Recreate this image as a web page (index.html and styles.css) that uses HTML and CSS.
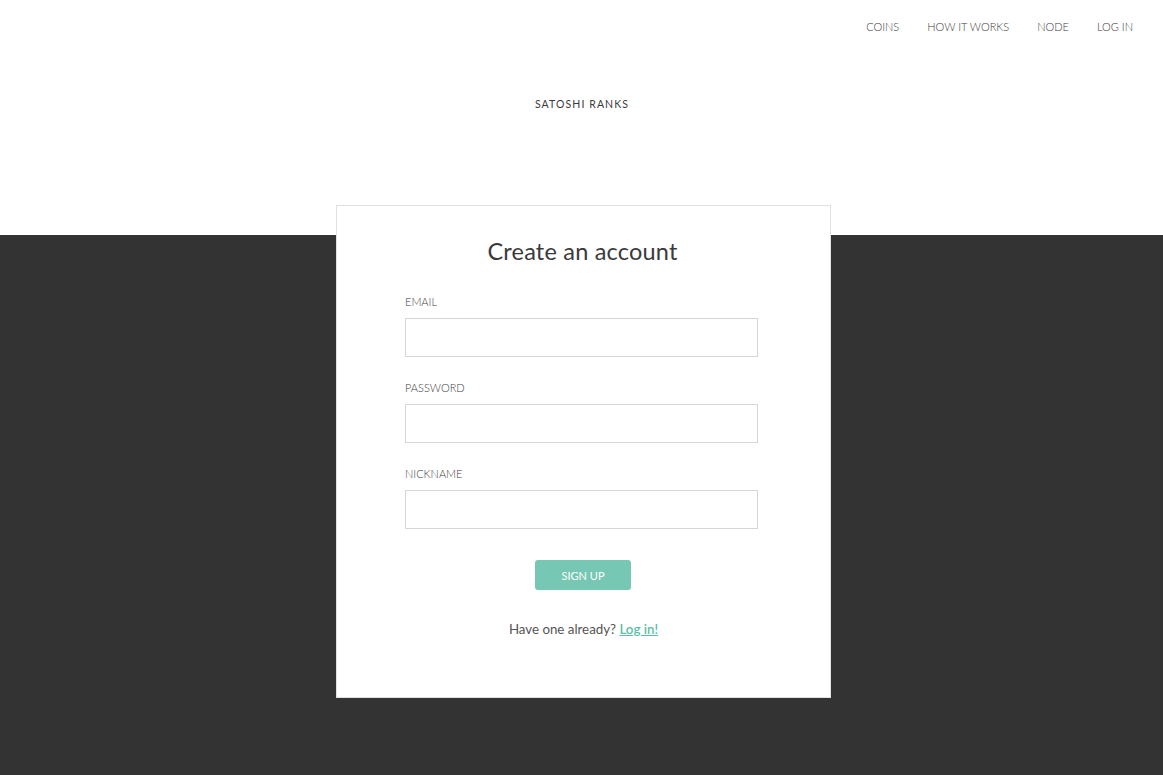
FILE: index.html
```html
<!DOCTYPE html>
<html>
<head>
<meta charset="utf-8">
<link rel="stylesheet" href="styles.css">
</head>
<body>
<header class="top">
  <nav class="nav">
    <a class="nav-link" href="#">COINS</a>
    <a class="nav-link" href="#">HOW IT WORKS</a>
    <a class="nav-link" href="#">NODE</a>
    <a class="nav-link" href="#">LOG IN</a>
  </nav>
  <div class="brand">SATOSHI RANKS</div>
</header>
<main class="band">
  <section class="card">
    <h1 class="title">Create an account</h1>
    <form class="form">
      <label class="field">
        <span class="label">EMAIL</span>
        <input class="input" type="text">
      </label>
      <label class="field">
        <span class="label">PASSWORD</span>
        <input class="input" type="password">
      </label>
      <label class="field">
        <span class="label">NICKNAME</span>
        <input class="input" type="text">
      </label>
      <button class="btn" type="button">SIGN UP</button>
    </form>
    <p class="alt">Have one already? <a class="alt-link" href="#">Log in!</a></p>
  </section>
</main>
</body>
</html>
```
FILE: styles.css
```css
html, body {
  margin: 0;
  padding: 0;
  height: 100%;
}
body {
  font-family: Lato, "Open Sans", "Liberation Sans", sans-serif;
  color: #444;
  background: #333333;
  display: flex;
  flex-direction: column;
}
.top {
  background: #fff;
  height: 235px;
  flex: none;
}
.nav {
  display: flex;
  justify-content: flex-end;
  gap: 28px;
  padding: 19px 30px 0 0;
}
.nav-link {
  font-size: 11px;
  line-height: 16px;
  color: #3c3c3c;
  font-weight: 300;
  text-decoration: none;
}
.brand {
  text-align: center;
  font-size: 10.5px;
  letter-spacing: 1.1px;
  color: #3a3a3a;
  margin-top: 61px;
  line-height: 16px;
  padding-left: 1px;
}
.band {
  flex: 1;
  background: #333333;
  display: flex;
  justify-content: center;
}
.card {
  box-sizing: border-box;
  width: 495px;
  margin: -30px 0 0 4px;
  height: 493px;
  background: #fff;
  border: 1px solid #e0e0e0;
  padding: 30px 70px 0 68px;
}
.title {
  margin: 0;
  text-align: center;
  font-size: 23.5px;
  font-weight: 400;
  line-height: 30px;
  color: #3a3a3a;
  letter-spacing: 0.2px;
}
.form {
  display: flex;
  flex-direction: column;
  margin-top: 29px;
}
.field {
  display: flex;
  flex-direction: column;
  margin-bottom: 24px;
}
.field:last-of-type {
  margin-bottom: 31px;
}
.label {
  font-size: 11px;
  line-height: 14px;
  color: #3c3c3c;
  font-weight: 300;
  margin-bottom: 9px;
}
.input {
  box-sizing: border-box;
  height: 39px;
  width: 353px;
  border: 1px solid #d6d6d6;
  border-radius: 0;
  margin: 0;
  background: #fff;
}
.btn {
  align-self: center;
  width: 96px;
  height: 30px;
  background: #76c7b3;
  border: none;
  border-radius: 3px;
  color: #fff;
  font-family: inherit;
  font-size: 11px;
  font-weight: 400;
  margin-left: 1px;
}
.alt {
  margin: 30px 0 0;
  text-align: center;
  font-size: 13.3px;
  line-height: 18px;
  color: #555;
  padding-left: 2px;
}
.alt-link {
  color: #5cbfa6;
  font-weight: 600;
  text-decoration: underline;
}
```
